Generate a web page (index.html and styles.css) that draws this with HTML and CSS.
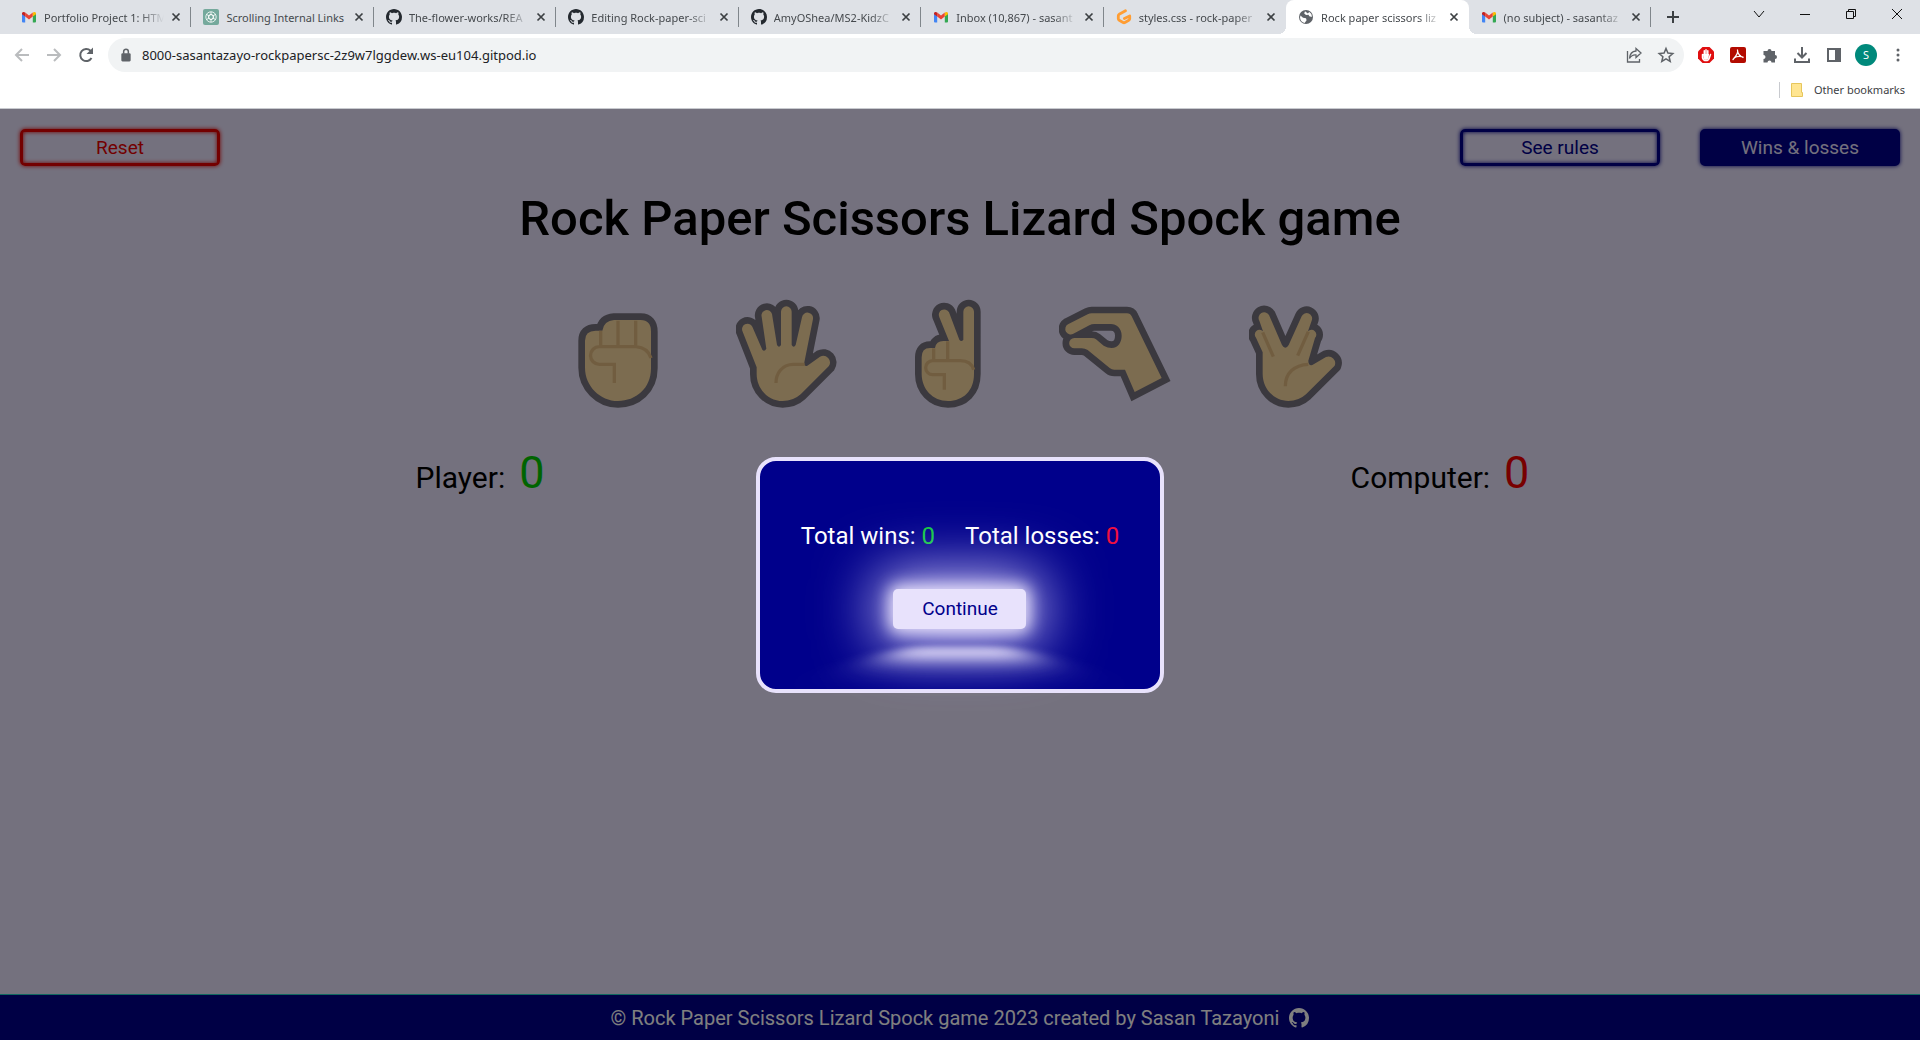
FILE: index.html
```html
<!DOCTYPE html>
<html lang="en">
<head>
<meta charset="utf-8">
<title>Rock paper scissors lizard Spock</title>
<link rel="stylesheet" href="styles.css">
</head>
<body>
<svg class="sprite" aria-hidden="true">
  <symbol id="gmail" viewBox="0 0 16 16">
    <path fill="#4285f4" d="M1 4v8.500q0 1 1 1h2.200V7z"/>
    <path fill="#34a853" d="M15 4v8.500q0 1-1 1h-2.200V7z"/>
    <path fill="#ea4335" d="M4.200 3.500 8 6.400l3.800-2.900V7.600L8 10.500 4.200 7.600z"/>
    <path fill="#c5221f" d="M1 4.500c0-1.800 1.800-2 3.200-1v4.100L1 5.300z"/>
    <path fill="#fbbc04" d="M15 4.500c0-1.800-1.800-2-3.200-1v4.100L15 5.300z"/>
  </symbol>
  <symbol id="github" viewBox="0 0 16 16">
    <path fill="currentColor" d="M8 0C3.580 0 0 3.580 0 8c0 3.540 2.290 6.530 5.470 7.590.4.070.55-.17.55-.38 0-.19-.01-.82-.01-1.490-2.010.37-2.530-.49-2.690-.94-.09-.23-.48-.94-.82-1.130-.28-.15-.68-.52-.01-.53.63-.01 1.080.58 1.230.82.72 1.210 1.870.87 2.330.66.07-.52.28-.87.51-1.070-1.780-.2-3.640-.89-3.640-3.950 0-.87.31-1.590.82-2.150-.08-.2-.36-1.020.08-2.120 0 0 .67-.21 2.200.82.64-.18 1.320-.27 2-.27s1.360.09 2 .27c1.530-1.040 2.200-.82 2.200-.82.44 1.100.16 1.920.08 2.120.51.56.82 1.270.82 2.150 0 3.070-1.870 3.750-3.650 3.950.29.25.54.73.54 1.480 0 1.070-.01 1.930-.01 2.200 0 .21.15.46.55.38A8.010 8.010 0 0 0 16 8c0-4.420-3.580-8-8-8z"/>
  </symbol>
  <symbol id="close" viewBox="0 0 10 10">
    <path d="M1.500 1.500l7 7M8.500 1.500l-7 7" stroke="#3c4043" stroke-width="1.700"/>
  </symbol>
</svg>

<header class="browser">
  <div class="tabstrip">
    <nav class="tabs" aria-label="Open tabs">
      <div class="tab"><svg class="favicon"><use href="#gmail"/></svg><a class="tab-title" href="#">Portfolio Project 1: HTM</a><button class="tab-close" aria-label="Close tab"><svg><use href="#close"/></svg></button></div>
      <div class="tab"><svg class="favicon" viewBox="0 0 16 16"><rect width="16" height="16" rx="2" fill="#75a99c"/><g fill="none" stroke="#fff" stroke-width="0.800"><circle cx="8" cy="8" r="5.200"/><path id="petal" d="M8 5.400 10.300 6.700V9.300M8 5.400V2.800"/><use href="#petal" transform="rotate(60 8 8)"/><use href="#petal" transform="rotate(120 8 8)"/><use href="#petal" transform="rotate(180 8 8)"/><use href="#petal" transform="rotate(240 8 8)"/><use href="#petal" transform="rotate(300 8 8)"/></g></svg><a class="tab-title" href="#">Scrolling Internal Links</a><button class="tab-close" aria-label="Close tab"><svg><use href="#close"/></svg></button></div>
      <div class="tab"><svg class="favicon"><use href="#github"/></svg><a class="tab-title" href="#">The-flower-works/REA</a><button class="tab-close" aria-label="Close tab"><svg><use href="#close"/></svg></button></div>
      <div class="tab"><svg class="favicon"><use href="#github"/></svg><a class="tab-title" href="#">Editing Rock-paper-sci</a><button class="tab-close" aria-label="Close tab"><svg><use href="#close"/></svg></button></div>
      <div class="tab"><svg class="favicon"><use href="#github"/></svg><a class="tab-title" href="#">AmyOShea/MS2-KidzC</a><button class="tab-close" aria-label="Close tab"><svg><use href="#close"/></svg></button></div>
      <div class="tab"><svg class="favicon"><use href="#gmail"/></svg><a class="tab-title" href="#">Inbox (10,867) - sasant</a><button class="tab-close" aria-label="Close tab"><svg><use href="#close"/></svg></button></div>
      <div class="tab tab-plain"><svg class="favicon" viewBox="0 0 16 16"><path d="M9.500 1.800 3.200 5.200Q2.300 5.700 2.300 6.700v3.100q0 1 .9 1.500l3.900 2.200q.9.500 1.800 0l3.900-2.200q.9-.5.900-1.500V7L8.400 9.500" fill="none" stroke="#ff9d33" stroke-width="2.800" stroke-linecap="round" stroke-linejoin="round"/></svg><a class="tab-title" href="#">styles.css - rock-paper</a><button class="tab-close" aria-label="Close tab"><svg><use href="#close"/></svg></button></div>
      <div class="tab tab-active"><svg class="favicon" viewBox="0 0 16 16"><circle cx="8" cy="8" r="7" fill="#5f6368"/><path d="M2.500 6.500 5 8.800l3 .4.600 2-2 2.800q-4-1-4.600-5.500zM7 2.200l-.8 2.300L8 6l2.500-.3.8 1.600 2.500.7q.3-3.500-2.600-5.100l-1.300 1.500z" fill="#fff"/></svg><a class="tab-title" href="#" aria-current="page">Rock paper scissors liz</a><button class="tab-close" aria-label="Close tab"><svg><use href="#close"/></svg></button></div>
      <div class="tab"><svg class="favicon"><use href="#gmail"/></svg><a class="tab-title" href="#">(no subject) - sasantaz</a><button class="tab-close" aria-label="Close tab"><svg><use href="#close"/></svg></button></div>
    </nav>
    <button class="new-tab" aria-label="New tab"><svg width="12" height="12" viewBox="0 0 12 12"><path d="M6 0v12M0 6h12" stroke="#3c4043" stroke-width="2"/></svg></button>
    <div class="window-controls">
      <button aria-label="Search tabs"><svg viewBox="0 0 12 12"><path d="M1 3l5 6 5-6"/></svg></button>
      <button aria-label="Minimise"><svg viewBox="0 0 12 12"><path d="M1 6.500h10"/></svg></button>
      <button aria-label="Restore"><svg viewBox="0 0 12 12"><path d="M1.500 3.500h7v7h-7zM3.500 3.500v-2h7v7h-2"/></svg></button>
      <button aria-label="Close"><svg viewBox="0 0 12 12"><path d="M1 1l10 10M11 1L1 11"/></svg></button>
    </div>
  </div>

  <div class="toolbar">
    <div class="tools">
      <button aria-label="Back"><svg viewBox="0 0 20 20"><path d="M17 10H4M10 4l-6 6 6 6" fill="none" stroke="#babcbe" stroke-width="2"/></svg></button>
      <button aria-label="Forward"><svg viewBox="0 0 20 20"><path d="M3 10h13M10 4l6 6-6 6" fill="none" stroke="#babcbe" stroke-width="2"/></svg></button>
      <button aria-label="Reload"><svg viewBox="0 0 20 20"><path d="M15.500 13A6 6 0 1 1 14.500 5.800L16 7.500" fill="none" stroke="#5f6368" stroke-width="2"/><path d="M17 2.500V9h-6.500z" fill="#5f6368"/></svg></button>
    </div>
    <div class="omnibox">
      <svg class="lock" viewBox="0 0 10 12"><rect x="1" y="4.500" width="8" height="7" rx="1" fill="#5f6368"/><path d="M3 5V3a2 2 0 0 1 4 0v2" fill="none" stroke="#5f6368" stroke-width="1.300"/></svg>
      <input class="address" type="text" aria-label="Address" value="8000-sasantazayo-rockpapersc-2z9w7lggdew.ws-eu104.gitpod.io">
      <div class="tools">
        <button aria-label="Share"><svg viewBox="0 0 20 20" fill="none" stroke="#5f6368" stroke-width="1.300"><path d="M3.500 6v11h12v-3"/><path d="M12 3.500l5 4.500-5 4.500V10q-4-.5-6.500 3.500Q6 6.500 12 6z"/></svg></button>
        <button aria-label="Bookmark"><svg viewBox="0 0 20 20"><path d="M10 3.500l1.900 4.600 4.900.4-3.700 3.200 1.100 4.800L10 13.900l-4.200 2.600 1.100-4.800-3.700-3.200 4.900-.4z" fill="none" stroke="#5f6368" stroke-width="1.500"/></svg></button>
      </div>
    </div>
    <div class="tools">
      <button aria-label="Ad blocker"><svg viewBox="0 0 20 20"><path d="M6.500 2h7L18 6.500v7L13.500 18h-7L2 13.500v-7z" fill="#e00f10"/><path d="M6.500 9.500v3.200q.8 2.800 3.500 2.800t3.300-2.500l1.200-3.500M8.300 10V5.800M10 10V4.800M11.800 10V5.800" stroke="#fff" stroke-width="1.500" stroke-linecap="round" fill="none"/><path d="M7 9h6l-.5 4.500L10 15l-2.500-1z" fill="#fff"/></svg></button>
      <button aria-label="PDF tools"><svg viewBox="0 0 20 20"><rect x="2" y="2" width="16" height="16" rx="2" fill="#b30b00"/><path d="M9.500 5q1.300 3-4.500 9.500M9.600 6q.4 4 5.400 6.500M6 13q4-2.500 9-1" fill="none" stroke="#fff" stroke-width="1.300" stroke-linecap="round"/></svg></button>
      <button aria-label="Extensions"><svg viewBox="0 0 20 20"><path d="M4 6h3.500a2 2 0 1 1 4 0H15v4a2 2 0 1 1 0 4v3.500h-3.500a2 2 0 1 0-4 0H3.500V14a2 2 0 1 0 0-4V6z" fill="#5f6368"/></svg></button>
      <button aria-label="Downloads"><svg viewBox="0 0 20 20"><path d="M10 2v10M5.500 8l4.500 4.500L14.500 8M3 13.500V17h14v-3.500" fill="none" stroke="#5f6368" stroke-width="2"/></svg></button>
      <button aria-label="Side panel"><svg viewBox="0 0 20 20"><path d="M4 4h12v12H4z" fill="none" stroke="#5f6368" stroke-width="2"/><path d="M11 4h5v12h-5z" fill="#5f6368"/></svg></button>
      <button aria-label="Profile"><span class="avatar">S</span></button>
      <button aria-label="Menu"><svg viewBox="0 0 20 20"><g fill="#5f6368"><circle cx="10" cy="5" r="1.500"/><circle cx="10" cy="10" r="1.500"/><circle cx="10" cy="15" r="1.500"/></g></svg></button>
    </div>
  </div>

  <div class="bookmarks">
    <a class="bookmark" href="#"><svg width="12" height="14" viewBox="0 0 12 14"><path d="M.5.5h10v9h1v4H.5z" fill="#ffe591" stroke="#e6c65c"/></svg>Other bookmarks</a>
  </div>
</header>

<div class="page">
  <nav class="menu">
    <button class="btn btn-reset">Reset</button>
    <div class="menu-right">
      <button class="btn">See rules</button>
      <button class="btn btn-solid">Wins &amp; losses</button>
    </div>
  </nav>

  <main class="game">
    <h1>Rock Paper Scissors Lizard Spock game</h1>
    <div class="hands">
      <button class="hand" aria-label="Rock"><svg width="80" height="109" viewBox="54 30 240 327">
        <path class="skin" d="M75 155q0-30 32-30h20q5-30 35-32h80q31 0 31 35v110c0 60-45 98-99 98s-99-45-99-100z"/>
        <path class="crease" d="M122 125v46M174 95v76M227 95v76M273 207q-10-31-45-34H118a26 26 0 0 0 0 53h45v56"/>
      </svg></button>
      <button class="hand" aria-label="Paper"><svg width="101" height="109" viewBox="528 30 303 327">
        <path class="skin" d="M590 235L548 128A16 16 0 0 1 577 113L607 182q6 8 12-3L605 83A16 16 0 0 1 636 75L651 168q6 10 12 0V68a16 16 0 0 1 32 0V168q6 10 12 0L726 85A16 16 0 0 1 759 90L732 225q2 8 10 5L780 203A20 20 0 0 1 806 232L722 316Q700 336 668 336C625 336 590 300 590 255z"/>
        <path class="crease" d="M734 226H700C665 226 648 255 648 282"/>
      </svg></button>
      <button class="hand" aria-label="Scissors"><svg width="66" height="109" viewBox="105 30 198 327">
        <path class="skin" d="M125 205q0-28 25-28h15q3-21 25-21h17L178 85A16 16 0 0 1 207 70L238 152q6 8 12 0V68a16 16 0 0 1 32 0V255C282 305 250 336 204 336S125 300 125 255z"/>
        <path class="crease" d="M161 178v35M203 157v56M281 242q-8-27-40-27H158a20 20 0 0 0 0 42h35v45"/>
      </svg></button>
      <button class="hand" aria-label="Lizard"><svg width="112" height="109" viewBox="534 30 336 327">
        <path class="skin skin-sharp" d="M561 106L620 76Q626 73 632 73H738Q748 73 752 82L842 267 761 309 732 242H700Q692 242 686 237L620 183Q612 178 602 178H580a15 15 0 0 1 0-31H632Q640 147 645 151L668 170Q680 177 692 177C712 177 722 158 722 140 722 118 706 105 690 105H640Q632 105 625 109L577 134A16 16 0 0 1 561 106z"/>
      </svg></button>
      <button class="hand" aria-label="Spock"><svg width="94" height="109" viewBox="1104 30 282 327">
        <path class="skin" d="M1145 190L1125 146A13 13 0 0 1 1146 127L1135 95A16 16 0 0 1 1164 78L1203 168q10 17 20 0L1262 82A16 16 0 0 1 1292 95L1281 127A14 14 0 0 1 1302 147L1282 215q0 16 12 13L1335 204A20 20 0 0 1 1361 230L1275 316Q1253 336 1222 336C1180 336 1145 300 1145 255z"/>
        <path class="crease" d="M1145 130L1177 203M1282 128L1250 200M1282 226C1240 228 1213 252 1213 292"/>
      </svg></button>
    </div>
    <div class="scores">
      <p class="score">Player: <span class="points win">0</span></p>
      <p class="score">Computer: <span class="points loss">0</span></p>
    </div>
  </main>

  <footer class="footer">
    <p>© Rock Paper Scissors Lizard Spock game 2023 created by Sasan Tazayoni</p>
    <a href="#" aria-label="GitHub"><svg width="20" height="20"><use href="#github"/></svg></a>
  </footer>

  <div class="overlay">
    <section class="modal" role="dialog" aria-label="Wins and losses">
      <div class="totals">
        <p>Total wins: <span class="total-win">0</span></p>
        <p>Total losses: <span class="total-loss">0</span></p>
      </div>
      <button class="continue">Continue</button>
    </section>
  </div>
</div>
</body>
</html>
```
FILE: styles.css
```css
:root {
  --lavender: #e8e2fc;
  --navy: #00008b;
}

* { box-sizing: border-box; }

body {
  margin: 0;
  min-height: 100vh;
  display: flex;
  flex-direction: column;
  font-family: "Noto Sans", "Open Sans", sans-serif;
}

button {
  border: 0;
  padding: 0;
  background: none;
  font: inherit;
  color: inherit;
}

a { color: inherit; text-decoration: none; }
p, h1 { margin: 0; }
svg { display: block; }
.sprite { position: absolute; width: 0; height: 0; }

/* Browser window */
.browser { background: #fff; border-bottom: 1px solid #c8cacf; }

.tabstrip {
  display: flex;
  align-items: flex-start;
  height: 34px;
  padding-left: 9px;
  background: #dee1e6;
}

.tabs {
  flex: 1;
  min-width: 0;
  max-width: 1642px;
  display: grid;
  grid-template-columns: repeat(9, minmax(0, 1fr));
}

.tab {
  position: relative;
  display: flex;
  align-items: center;
  gap: 7px;
  height: 34px;
  padding: 0 10px 0 12px;
  color: #45494d;
  font-size: 11px;
}

.tab::after {
  content: "";
  position: absolute;
  right: 0;
  top: 7px;
  width: 1px;
  height: 20px;
  background: #80868b;
}

.tab-plain::after { display: none; }

.tab-active { background: #fff; border-radius: 8px 8px 0 0; }

.tab-active::before,
.tab-active::after {
  content: "";
  position: absolute;
  top: auto;
  bottom: 0;
  width: 8px;
  height: 8px;
}

.tab-active::before {
  left: -8px;
  background: radial-gradient(circle at 0 0, transparent 8px, #fff 8px);
}

.tab-active::after {
  right: -8px;
  background: radial-gradient(circle at 100% 0, transparent 8px, #fff 8px);
}

.favicon { flex: none; width: 16px; height: 16px; color: #24292f; }

.tab-title {
  flex: 1;
  min-width: 0;
  overflow: hidden;
  white-space: nowrap;
  -webkit-mask-image: linear-gradient(to left, transparent, #000 24px);
  mask-image: linear-gradient(to left, transparent, #000 24px);
}

.tab:nth-child(2) .tab-title { -webkit-mask-image: none; mask-image: none; }

.tab-close svg { width: 10px; height: 10px; }
.new-tab { height: 34px; padding: 0 16px; }

.window-controls { display: flex; margin-left: auto; }
.window-controls button {
  width: 46px;
  height: 28px;
  display: grid;
  place-items: center;
}
.window-controls svg {
  width: 12px;
  height: 12px;
  fill: none;
  stroke: #111;
}

.toolbar {
  display: flex;
  align-items: center;
  gap: 6px;
  height: 42px;
  padding: 0 6px;
}

.tools { display: flex; }
.tools button {
  width: 32px;
  height: 32px;
  display: grid;
  place-items: center;
}
.tools svg { width: 20px; height: 20px; }

.omnibox {
  flex: 1;
  display: flex;
  align-items: center;
  height: 34px;
  padding: 0 2px 0 12px;
  border-radius: 17px;
  background: #f1f3f4;
}

.lock { width: 12px; height: 14px; }

.address {
  flex: 1;
  border: 0;
  padding: 0 0 0 10px;
  background: none;
  color: #202124;
  font: 13px "Noto Sans", sans-serif;
}

.avatar {
  width: 22px;
  height: 22px;
  border-radius: 50%;
  background: #00897b;
  color: #fff;
  font-size: 11px;
  line-height: 22px;
}

.bookmarks {
  display: flex;
  justify-content: flex-end;
  align-items: center;
  height: 32px;
  padding: 0 15px 5px;
}

.bookmark {
  display: flex;
  align-items: center;
  gap: 11px;
  height: 16px;
  padding-left: 11px;
  border-left: 1px solid #c8cacf;
  color: #3c4043;
  font-size: 11px;
}

/* Game page */
.page {
  position: relative;
  flex: 1;
  display: flex;
  flex-direction: column;
  background: var(--lavender);
  font-family: Roboto, sans-serif;
}

.menu {
  display: flex;
  justify-content: space-between;
  padding: 20px;
}

.menu-right { display: flex; gap: 40px; }

.btn {
  width: 200px;
  height: 37px;
  border: 3px solid currentColor;
  border-radius: 5px;
  color: var(--navy);
  font-size: 19px;
  box-shadow: 0 0 4px currentColor, inset 0 0 4px currentColor;
}

.btn-reset { color: #e60000; }

.btn-solid {
  border-color: var(--navy);
  background: var(--navy);
  color: var(--lavender);
  box-shadow: 0 0 4px var(--navy);
}

.game { flex: 1; }

h1 {
  padding-top: 3px;
  text-align: center;
  font-size: 49px;
  line-height: 60px;
  font-weight: 500;
}

.hands {
  display: flex;
  justify-content: center;
  gap: 78px;
  margin-top: 50px;
}

.skin {
  fill: #f8d8a0;
  stroke: #76727e;
  stroke-width: 40;
  stroke-linejoin: round;
  paint-order: stroke;
}
.skin-sharp { stroke-linejoin: miter; }
.crease { fill: none; stroke: #e3bb80; stroke-width: 10; }

.scores { display: flex; margin-top: 35px; }

.score {
  flex: 1;
  display: flex;
  justify-content: center;
  align-items: baseline;
  gap: 14px;
  font-size: 30px;
  line-height: 60px;
}

.points { font-size: 45px; }
.win { color: #00c800; }
.loss { color: #f00000; }

.footer {
  display: flex;
  justify-content: center;
  align-items: center;
  gap: 10px;
  height: 46px;
  border-top: 1px solid #20d0c0;
  background: var(--navy);
  color: #fff;
  font-size: 20px;
}

/* Dialog */
.overlay {
  position: absolute;
  inset: 0;
  display: flex;
  justify-content: center;
  align-items: center;
  overflow: hidden;
  background: rgba(0, 0, 0, 0.5);
}

.modal {
  display: flex;
  flex-direction: column;
  align-items: center;
  gap: 38px;
  padding: 60px 41px;
  border: 4px solid var(--lavender);
  border-radius: 20px;
  background: var(--navy);
  color: #fff;
}

.totals {
  display: flex;
  gap: 30px;
  font-size: 24px;
  line-height: 30px;
}

.total-win { color: #10c840; }
.total-loss { color: #f01040; }

.continue {
  position: relative;
  width: 133px;
  height: 40px;
  border-radius: 5px;
  background: var(--lavender);
  color: var(--navy);
  font-size: 19px;
  box-shadow: 0 0 16px 4px var(--lavender), 0 0 60px 16px rgba(220, 212, 255, 0.9);
}

/* Light cast on the floor under the button */
.continue::after {
  content: "";
  position: absolute;
  top: 110%;
  left: 0;
  width: 100%;
  height: 100%;
  background: var(--lavender);
  filter: blur(16px);
  opacity: 0.9;
  transform: perspective(24px) rotateX(35deg) scale(1, 0.4);
  pointer-events: none;
}
```
